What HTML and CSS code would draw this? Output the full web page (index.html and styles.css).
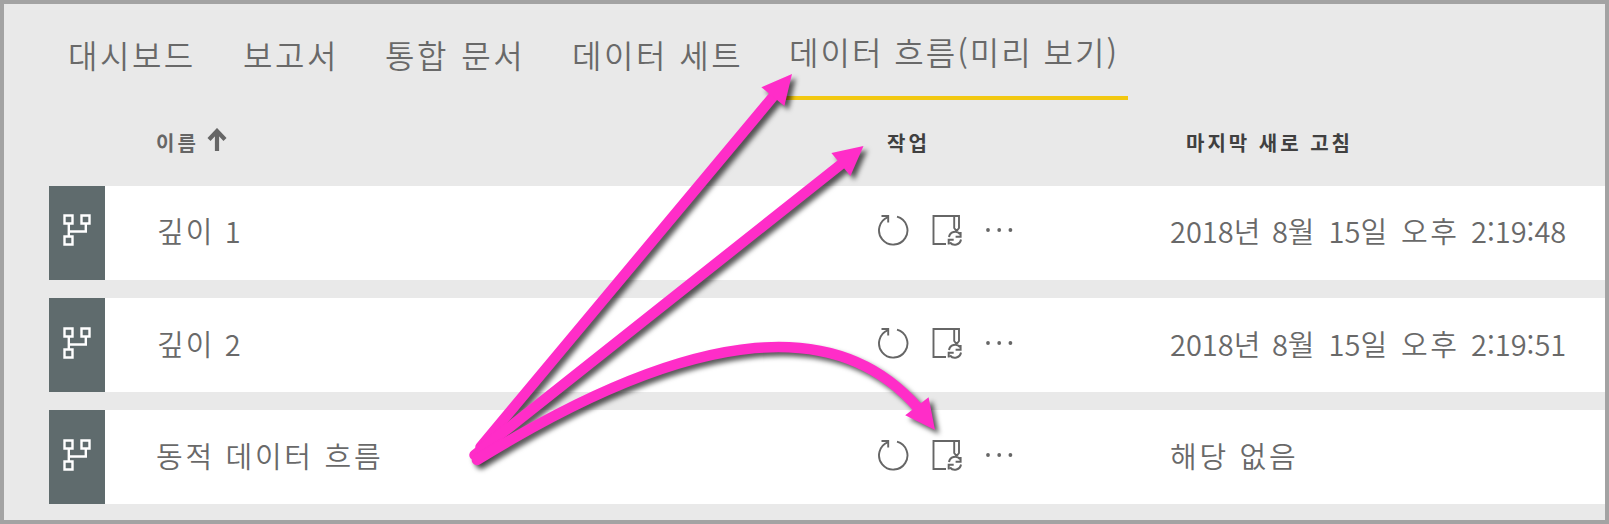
FILE: index.html
```html
<!DOCTYPE html>
<html lang="ko">
<head>
<meta charset="utf-8">
<title>데이터 흐름</title>
<link rel="stylesheet" href="styles.css">
</head>
<body>
<svg class="defs" width="0" height="0" aria-hidden="true">
  <symbol id="flow" viewBox="0 0 28 32">
    <path d="M1.5 1.5h8v8h-8zM18.5 1.5h8v8h-8zM1.5 22.5h8v8h-8zM5.8 9.5v13M5.8 17.5h17v-8" fill="none" stroke="#fff" stroke-width="2.4"/>
  </symbol>
  <symbol id="refresh" viewBox="0 0 32 32">
    <path d="M20 2.7A14.2 14.2 0 1 1 11 3.2" fill="none" stroke="#666" stroke-width="1.9"/>
    <path d="M4.5 2h6.7v6.6" fill="none" stroke="#666" stroke-width="1.9"/>
  </symbol>
  <symbol id="update" viewBox="0 0 32 32">
    <path d="M15 30H2.5V2H28v12l-1.6 2h-1.6l-1.6-2V2" fill="none" stroke="#666" stroke-width="1.9"/>
    <path d="M18 23a6.3 6.3 0 0 1 11-3M29.6 18v4.8h-5M30 25.5a6.3 6.3 0 0 1-11 3M17.7 30.5v-4.8h5" fill="none" stroke="#666" stroke-width="2"/>
  </symbol>
  <symbol id="more" viewBox="0 0 28 6">
    <g fill="#666"><circle cx="3" cy="3" r="1.9"/><circle cx="14.2" cy="3" r="1.9"/><circle cx="25.4" cy="3" r="1.9"/></g>
  </symbol>
</svg>
<main class="frame">
  <nav class="tabs">
    <a class="tab tab-1">대시보드</a>
    <a class="tab tab-2">보고서</a>
    <a class="tab tab-3">통합 문서</a>
    <a class="tab tab-4">데이터 세트</a>
    <a class="tab tab-active">데이터 흐름(미리 보기)</a>
  </nav>
  <div class="head">
    <div class="head-name">이름
      <svg class="sort" viewBox="0 0 20 24"><path d="M10 23V3.500M2 11.500L10 3l8 8.500" fill="none" stroke="#666" stroke-width="4.200"/></svg>
    </div>
    <div class="head-actions">작업</div>
    <div class="head-date">마지막 새로 고침</div>
  </div>
  <section class="rows">
    <div class="row">
      <div class="tile"><svg class="i-flow"><use href="#flow"/></svg></div>
      <div class="name">깊이 1</div>
      <div class="actions"><svg class="i-act"><use href="#refresh"/></svg><svg class="i-act"><use href="#update"/></svg><svg class="i-more"><use href="#more"/></svg></div>
      <div class="date">2018년 8<span class="unit">월</span> 15<span class="unit">일</span> <span class="unit">오후</span> 2:19:48</div>
    </div>
    <div class="row">
      <div class="tile"><svg class="i-flow"><use href="#flow"/></svg></div>
      <div class="name">깊이 2</div>
      <div class="actions"><svg class="i-act"><use href="#refresh"/></svg><svg class="i-act"><use href="#update"/></svg><svg class="i-more"><use href="#more"/></svg></div>
      <div class="date">2018년 8<span class="unit">월</span> 15<span class="unit">일</span> <span class="unit">오후</span> 2:19:51</div>
    </div>
    <div class="row">
      <div class="tile"><svg class="i-flow"><use href="#flow"/></svg></div>
      <div class="name name-long">동적 데이터 흐름</div>
      <div class="actions"><svg class="i-act"><use href="#refresh"/></svg><svg class="i-act"><use href="#update"/></svg><svg class="i-more"><use href="#more"/></svg></div>
      <div class="date date-none">해당 없음</div>
    </div>
  </section>
</main>
<svg class="arrows" viewBox="0 0 1609 524">
  <g class="arrow"><path d="M480.5 447L774 95.5"/><polygon points="792,74 761.4,87.3 784.4,106"/></g>
  <g class="arrow"><path d="M474.5 455L842 163.5"/><polygon points="863.5,146 831.4,153 850.4,176"/></g>
  <g class="arrow"><path d="M477 460Q794 264 918 408"/><polygon points="935,430 928.6,397.3 905.2,415.3"/></g>
</svg>
</body>
</html>
```
FILE: styles.css
```css
* { box-sizing: border-box; }
body {
  margin: 0;
  font-family: "Noto Sans CJK KR", sans-serif;
  font-weight: 350;
  color: #696969;
}
.defs { display: none; }
.frame {
  width: 1609px;
  height: 524px;
  border: 4px solid #a3a3a3;
  background: #e9e9e9;
  overflow: hidden;
}
.tabs {
  display: flex;
  height: 96px;
  padding-left: 64px;
  white-space: nowrap;
  font-size: 32px;
  line-height: 48px;
  letter-spacing: 2.5px;
}
.tab { padding-top: 26px; flex: none; }
.tab-1 { width: 175px; }
.tab-2 { width: 142px; }
.tab-3 { width: 187px; word-spacing: 1px; }
.tab-4 { width: 208px; }
.tab-active {
  width: 348px;
  padding-left: 9px;
  padding-top: 23px;
  letter-spacing: 2px;
  border-bottom: 4px solid #f2c811;
}
.head {
  display: flex;
  height: 85.5px;
  padding: 27.5px 0 0 152px;
  font-size: 20px;
  line-height: 30px;
  font-weight: 700;
  letter-spacing: 3px;
  color: #404040;
  white-space: nowrap;
}
.head-name { display: flex; gap: 8px; width: 731px; color: #666; }
.sort { width: 20px; height: 24px; }
.head-actions { width: 299px; }
.rows { display: flex; flex-direction: column; gap: 18.3px; padding-left: 45px; }
.row {
  display: flex;
  align-items: center;
  height: 94px;
  background: #fff;
  font-size: 29px;
  line-height: 44px;
  white-space: nowrap;
}
.tile {
  display: flex;
  align-items: center;
  justify-content: center;
  width: 56px;
  height: 94px;
  background: #5f6b6d;
}
.i-flow { width: 28px; height: 32px; margin-bottom: 4.5px; }
.name { width: 772px; padding: 0 0 4.5px 52px; letter-spacing: 2.1px; }
.name-long { padding-left: 51px; letter-spacing: 2.7px; }
.actions { display: flex; align-items: center; gap: 22px; width: 293px; padding-bottom: 4.5px; }
.i-act { width: 32px; height: 32px; }
.i-more { width: 28px; height: 6px; }
.date { padding-bottom: 4.5px; word-spacing: 3.4px; }
.unit { letter-spacing: 2.5px; }
.date-none { letter-spacing: 2.7px; word-spacing: 0; }
.arrows {
  position: absolute;
  left: 0;
  top: 0;
  width: 1609px;
  height: 524px;
}
.arrow { filter: drop-shadow(4px 4px 2.5px rgba(0, 0, 0, 0.65)); }
.arrow path { fill: none; stroke: #ff2dc8; stroke-width: 10.5px; stroke-linecap: round; }
.arrow polygon { fill: #ff2dc8; }
```
